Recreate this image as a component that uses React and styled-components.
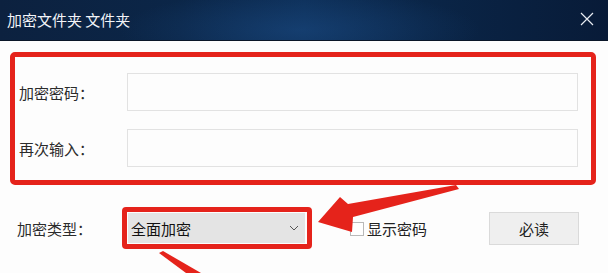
import React from "react";
import styled, { createGlobalStyle } from "styled-components";

const Global = createGlobalStyle`
  html, body { margin: 0; padding: 0; background: #fdfdfd; }
  body { font-family: "Noto Sans CJK SC", "Noto Sans", sans-serif; }
  * { box-sizing: border-box; }
`;

const Window = styled.div`
  position: relative;
  width: 608px;
  height: 273px;
  overflow: hidden;
  background: #fdfdfd;
  display: flex;
  flex-direction: column;
`;

const TitleBar = styled.div`
  height: 41px;
  flex: none;
  display: flex;
  align-items: center;
  justify-content: space-between;
  padding: 0 14px 2px 7px;
  background:
    radial-gradient(ellipse 180px 40px at 300px 30px, rgba(30, 80, 140, 0.45), transparent),
    linear-gradient(90deg, #0c213f 0%, #0b2648 30%, #0d2f58 50%, #0a2547 70%, #081b38 100%);
  border-bottom: 1px solid #0a1628;
  color: #f2f4f8;
  font-size: 15px;
  letter-spacing: 0;
`;

const Close = styled.svg`
  width: 14px;
  height: 14px;
`;

const Body = styled.div`
  flex: 1;
  padding: 11px 12px 0 10px;
  display: flex;
  flex-direction: column;
  gap: 22px;
`;

const Highlight = styled.div`
  border: 5px solid #e5231b;
  border-radius: 5px;
  padding: 16px 13px 13px 2px;
  display: flex;
  flex-direction: column;
  gap: 18px;
`;

const Row = styled.div`
  display: flex;
  align-items: center;
`;

const Label = styled.span`
  width: ${(p) => p.$w}px;
  flex: none;
  font-size: 15px;
  color: #2b2b2b;
  padding-left: ${(p) => p.$pad || 0}px;
`;

const Input = styled.div`
  flex: 1;
  height: 38px;
  background: #fdfdfd;
  border: 1px solid #e2e2e2;
`;

const BottomRow = styled.div`
  display: flex;
  align-items: center;
  height: 42px;
`;

const SelectFrame = styled.div`
  width: 190px;
  height: 42px;
  flex: none;
  border: 5px solid #e5231b;
  border-radius: 4px;
  padding: 1px 2px 1px 1px;
`;

const Select = styled.div`
  height: 100%;
  background: #e4e4e4;
  display: flex;
  align-items: center;
  justify-content: space-between;
  padding: 0 6px 0 3px;
  font-size: 15px;
  color: #111;
`;

const Chevron = styled.svg`
  width: 10px;
  height: 6px;
`;

const Check = styled.label`
  display: flex;
  align-items: center;
  gap: 3px;
  margin-left: 38px;
  font-size: 15px;
  color: #222;
  flex: none;
`;

const Box = styled.span`
  width: 14px;
  height: 14px;
  border: 1px solid #b9b9b9;
  background: #fff;
  margin-top: 2px;
`;

const Button = styled.div`
  flex: none;
  margin-left: auto;
  margin-right: 17px;
  margin-top: 1px;
  width: 90px;
  height: 33px;
  background: #efefef;
  border: 1px solid #dadada;
  display: flex;
  align-items: center;
  justify-content: center;
  font-size: 15px;
  color: #222;
`;

const Arrows = styled.svg`
  position: absolute;
  left: 0;
  top: 0;
  width: 608px;
  height: 273px;
  pointer-events: none;
`;

export default function App() {
  return (
    <Window>
      <Global />
      <TitleBar>
        <span>加密文件夹 文件夹</span>
        <Close viewBox="0 0 14 14">
          <path d="M1 1 L13 13 M13 1 L1 13" stroke="#e8ecf2" strokeWidth="1.2" fill="none" />
        </Close>
      </TitleBar>
      <Body>
        <Highlight>
          <Row>
            <Label $w={110} $pad={2}>加密密码：</Label>
            <Input />
          </Row>
          <Row>
            <Label $w={110} $pad={2}>再次输入：</Label>
            <Input />
          </Row>
        </Highlight>
        <BottomRow>
          <Label $w={112} $pad={7}>加密类型：</Label>
          <SelectFrame>
            <Select>
              <span>全面加密</span>
              <Chevron viewBox="0 0 10 6">
                <path d="M1 1 L5 5 L9 1" stroke="#555" strokeWidth="1" fill="none" />
              </Chevron>
            </Select>
          </SelectFrame>
          <Check>
            <Box />
            显示密码
          </Check>
          <Button>必读</Button>
        </BottomRow>
      </Body>
      <Arrows viewBox="0 0 608 273">
        <polygon
          points="318,222 340,197 348,204 456,185 459,189 353,217 352,232"
          fill="#e5231b"
        />
        <polygon points="159,253 163,251 201,273 186,273" fill="#e5231b" />
      </Arrows>
    </Window>
  );
}
